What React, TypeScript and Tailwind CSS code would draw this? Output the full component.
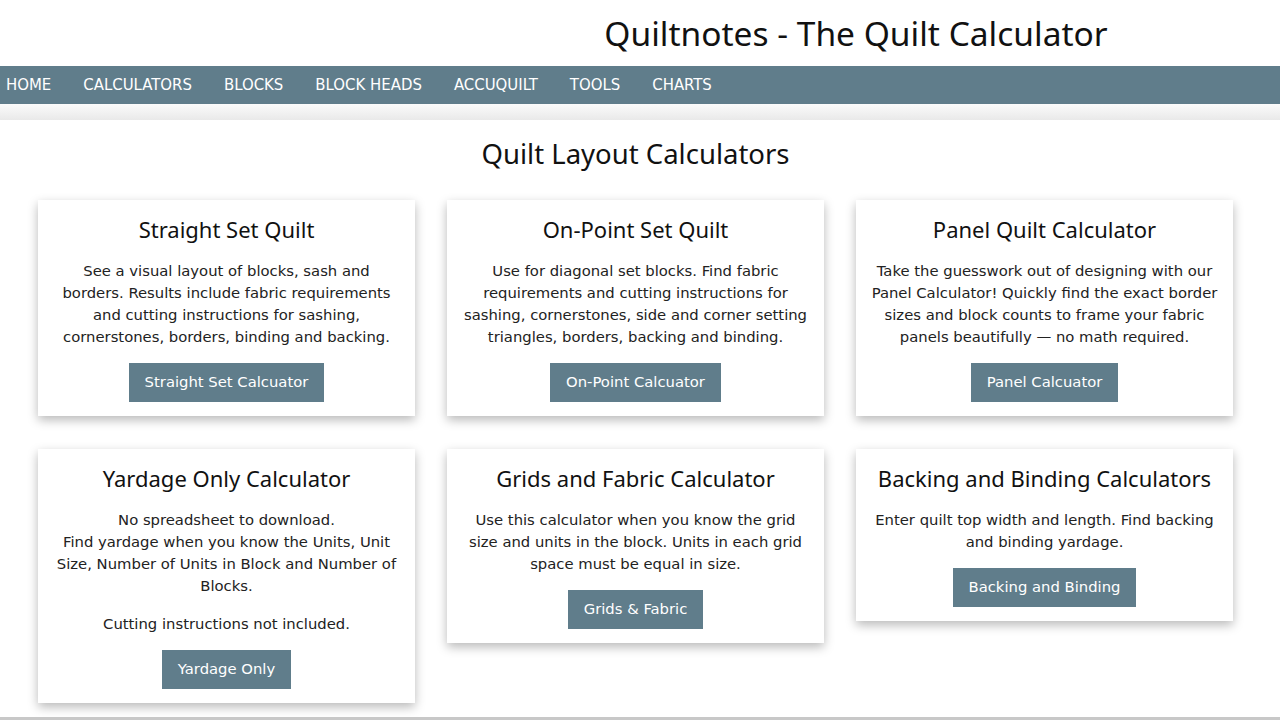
const navItems = ['HOME', 'CALCULATORS', 'BLOCKS', 'BLOCK HEADS', 'ACCUQUILT', 'TOOLS', 'CHARTS'];

type Calc = {
  title: string;
  body: string[];
  extra?: string;
  button: string;
};

const calcs: Calc[] = [
  {
    title: 'Straight Set Quilt',
    body: [
      'See a visual layout of blocks, sash and borders. Results include fabric requirements and cutting instructions for sashing, cornerstones, borders, binding and backing.',
    ],
    button: 'Straight Set Calcuator',
  },
  {
    title: 'On-Point Set Quilt',
    body: [
      'Use for diagonal set blocks. Find fabric requirements and cutting instructions for sashing, cornerstones, side and corner setting triangles, borders, backing and binding.',
    ],
    button: 'On-Point Calcuator',
  },
  {
    title: 'Panel Quilt Calculator',
    body: [
      'Take the guesswork out of designing with our Panel Calculator! Quickly find the exact border sizes and block counts to frame your fabric panels beautifully \u2014 no math required.',
    ],
    button: 'Panel Calcuator',
  },
  {
    title: 'Yardage Only Calculator',
    body: [
      'No spreadsheet to download.',
      'Find yardage when you know the Units, Unit Size, Number of Units in Block and Number of Blocks.',
    ],
    extra: 'Cutting instructions not included.',
    button: 'Yardage Only',
  },
  {
    title: 'Grids and Fabric Calculator',
    body: [
      'Use this calculator when you know the grid size and units in the block. Units in each grid space must be equal in size.',
    ],
    button: 'Grids & Fabric',
  },
  {
    title: 'Backing and Binding Calculators',
    body: ['Enter quilt top width and length. Find backing and binding yardage.'],
    button: 'Backing and Binding',
  },
];

function CalcCard({ calc }: { calc: Calc }) {
  return (
    <div className="w-[377px] bg-white px-[14px] pt-[14px] pb-[14px] text-center shadow-[0_4px_10px_rgba(0,0,0,0.28)]">
      <h2 className="font-['Noto_Sans',sans-serif] text-[22px] leading-[30px] text-[#111]">
        {calc.title}
      </h2>
      <div className="mt-[16px] font-['DejaVu_Sans',sans-serif] text-[14.8px] leading-[22px] text-[#222]">
        {calc.body.map((line) => (
          <p key={line}>{line}</p>
        ))}
        {calc.extra && <p className="mt-[16px]">{calc.extra}</p>}
      </div>
      <button
        type="button"
        className="mt-[15px] h-[39px] bg-[#607d8b] px-[16px] font-['DejaVu_Sans',sans-serif] text-[14.8px] text-white"
      >
        {calc.button}
      </button>
    </div>
  );
}

export default function App() {
  return (
    <div className="flex h-[720px] flex-col overflow-hidden bg-white font-['DejaVu_Sans',sans-serif]">
      <header className="flex h-[66px] shrink-0 items-center justify-center pl-[432px]">
        <h1 className="font-['Noto_Sans',sans-serif] text-[33.5px] text-[#111]">
          Quiltnotes - The Quilt Calculator
        </h1>
      </header>

      <nav className="flex h-[38px] shrink-0 items-center gap-[32px] bg-[#607d8b] pl-[6px]">
        {navItems.map((item) => (
          <a key={item} className="font-['DejaVu_Sans_Condensed','DejaVu_Sans',sans-serif] text-[16.6px] text-white">
            {item}
          </a>
        ))}
      </nav>

      <div className="h-[16px] shrink-0 bg-gradient-to-b from-[#fbfbfb] to-[#e9e9e9]" />

      <main className="w-[1233px] flex-1 pl-[38px]">
        <h2 className="mt-[14px] text-center font-['Noto_Sans',sans-serif] text-[27.5px] leading-[40px] text-[#111]">
          Quilt Layout Calculators
        </h2>
        <div className="mt-[26px] grid grid-cols-[377px_377px_377px] items-start gap-x-[32px] gap-y-[33px]">
          {calcs.map((c) => (
            <CalcCard key={c.title} calc={c} />
          ))}
        </div>
      </main>

      <div className="h-[3px] shrink-0 bg-[#c8c8c8]" />
    </div>
  );
}
